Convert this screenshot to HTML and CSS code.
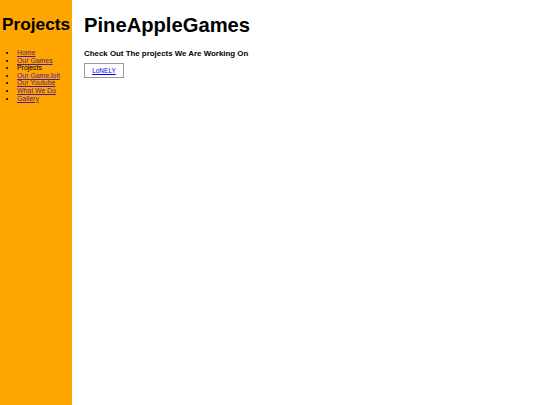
FILE: index.html
```html
<!DOCTYPE html>
<html>
<head>
<meta charset="utf-8">
<link rel="stylesheet" href="styles.css">
</head>
<body>
<div class="page">
  <aside class="sidebar">
    <h1 class="side-title">Projects</h1>
    <ul class="nav">
      <li><a href="#">Home</a></li>
      <li><a href="#">Our Games</a></li>
      <li>Projects</li>
      <li><a href="#">Our GameJolt</a></li>
      <li><a href="#">Our Youtube</a></li>
      <li><a href="#">What We Do</a></li>
      <li><a href="#">Gallery</a></li>
    </ul>
  </aside>
  <main class="content">
    <h1 class="title">PineAppleGames</h1>
    <h3 class="subtitle">Check Out The projects We Are Working On</h3>
    <div class="btn"><a href="#">LoNELY</a></div>
  </main>
</div>
</body>
</html>
```
FILE: styles.css
```css
html, body {
  margin: 0;
  padding: 0;
  height: 100%;
}
body {
  font-family: "Liberation Sans", Arial, sans-serif;
  color: #000;
  background: #fff;
}
.page {
  display: flex;
  min-height: 100%;
}
.sidebar {
  width: 72px;
  background: #ffa500;
  flex-shrink: 0;
}
.side-title {
  margin: 14px 0 0 2px;
  font-size: 17.3px;
  font-weight: bold;
  line-height: 20px;
}
.nav {
  margin: 15px 0 0 0;
  padding-left: 17px;
  font-size: 6.9px;
  line-height: 7.6px;
}
.nav a {
  color: #551a8b;
}
.content {
  padding-left: 12px;
}
.title {
  margin: 13px 0 0 0;
  font-size: 20.2px;
  line-height: 24px;
  font-weight: bold;
}
.subtitle {
  margin: 12px 0 0 0;
  font-size: 7.9px;
  line-height: 10px;
  font-weight: bold;
}
.btn {
  margin-top: 4px;
  width: 38px;
  height: 13px;
  border: 1px solid #9a9a9a;
  display: flex;
  align-items: center;
  justify-content: center;
  font-size: 6.5px;
}
.btn a {
  color: #0000ee;
}
```
